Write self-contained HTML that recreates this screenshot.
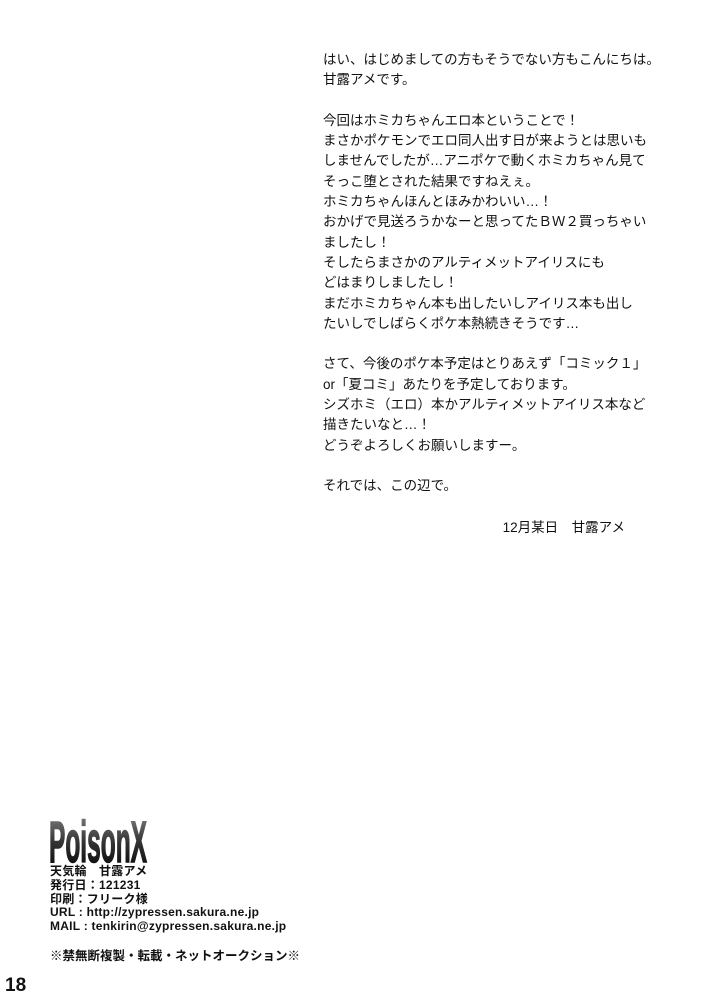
<!DOCTYPE html>
<html><head><meta charset="utf-8"><style>
html,body{margin:0;padding:0;background:#fff;}
body{width:701px;height:1000px;position:relative;overflow:hidden;font-family:"Liberation Sans","Noto Sans CJK JP",sans-serif;color:#111;}
.main{position:absolute;left:323px;top:50px;font-size:13.5px;line-height:20.3px;white-space:pre;}
.sig{position:absolute;left:0;width:625px;text-align:right;top:516px;font-size:13.5px;}
.foot{position:absolute;left:50px;top:865px;font-size:12px;font-weight:bold;line-height:13.8px;white-space:pre;letter-spacing:0.25px;}
.ban{position:absolute;left:50px;top:945px;font-size:12.5px;font-weight:bold;}
.pn{position:absolute;left:5px;top:975px;font-size:19px;font-weight:bold;}
</style></head><body>
<div class="main">はい、はじめましての方もそうでない方もこんにちは。
甘露アメです。

今回はホミカちゃんエロ本ということで！
まさかポケモンでエロ同人出す日が来ようとは思いも
しませんでしたが…アニポケで動くホミカちゃん見て
そっこ堕とされた結果ですねえぇ。
ホミカちゃんほんとほみかわいい…！
おかげで見送ろうかなーと思ってたＢＷ２買っちゃい
ましたし！
そしたらまさかのアルティメットアイリスにも
どはまりしましたし！
まだホミカちゃん本も出したいしアイリス本も出し
たいしでしばらくポケ本熱続きそうです…

さて、今後のポケ本予定はとりあえず「コミック１」
or「夏コミ」あたりを予定しております。
シズホミ（エロ）本かアルティメットアイリス本など
描きたいなと…！
どうぞよろしくお願いしますー。

それでは、この辺で。</div>
<div class="sig">12月某日　甘露アメ</div>
<svg style="position:absolute;left:48px;top:814px" width="110" height="52">
<defs><linearGradient id="g" x1="0" y1="0" x2="0" y2="1"><stop offset="0" stop-color="#888"/><stop offset="0.5" stop-color="#333"/><stop offset="1" stop-color="#000"/></linearGradient></defs>
<text x="1" y="48" font-family="Liberation Sans" font-weight="bold" font-size="58" fill="url(#g)" stroke="url(#g)" stroke-width="1.5" textLength="98" lengthAdjust="spacingAndGlyphs">PoisonX</text>
</svg>
<div class="foot">天気輪　甘露アメ
発行日：121231
印刷：フリーク様
URL : http://zypressen.sakura.ne.jp
MAIL : tenkirin@zypressen.sakura.ne.jp</div>
<div class="ban">※禁無断複製・転載・ネットオークション※</div>
<div class="pn">18</div>
</body></html>
